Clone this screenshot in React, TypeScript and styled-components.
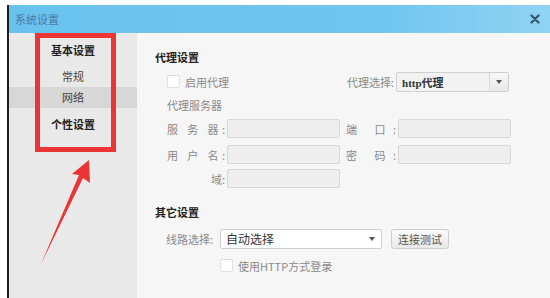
import styled, { createGlobalStyle } from "styled-components";

const Global = createGlobalStyle`
  html, body { margin: 0; padding: 0; background: #fff; }
  body { font-family: "Noto Sans CJK SC", "Noto Sans", sans-serif; }
`;

const FONT = `"Noto Sans CJK SC", "Noto Sans", sans-serif`;

const Frame = styled.div`
  width: 550px;
  height: 298px;
  padding: 5px 0 0 7px;
  box-sizing: border-box;
  overflow: hidden;
  background: #fff;
`;

const Win = styled.div`
  position: relative;
  height: 100%;
  display: flex;
  flex-direction: column;
  border-left: 2px solid #1e1e1e;
`;

const TitleBar = styled.div`
  height: 28px;
  flex: none;
  display: flex;
  align-items: center;
  justify-content: space-between;
  padding: 0 10px 0 6px;
  background: linear-gradient(90deg, #69c2ee 0%, #71c6ef 70%, #8fd3f3 100%);
`;

const Title = styled.span`
  font-size: 11px;
  color: #4b7ba3;
  font-family: ${FONT};
`;

const Close = styled.svg`
  display: block;
`;

const Body = styled.div`
  flex: 1;
  display: flex;
`;

const Sidebar = styled.div`
  width: 128px;
  flex: none;
  background: #e9e9e9;
  display: flex;
  flex-direction: column;
  padding-top: 7px;
`;

const NavItem = styled.div<{ $head?: boolean; $active?: boolean; $gap?: number }>`
  height: 21px;
  line-height: 21px;
  margin-top: ${(p) => p.$gap ?? 0}px;
  text-align: center;
  font-size: 11px;
  font-weight: ${(p) => (p.$head ? 700 : 400)};
  color: ${(p) => (p.$head ? "#222" : "#444")};
  background: ${(p) => (p.$active ? "#d7d7d7" : "transparent")};
`;

const Main = styled.div`
  flex: 1;
  background: #f6f6f6;
  padding: 16px 0 0 18px;
  display: flex;
  flex-direction: column;
`;

const Heading = styled.div<{ $gap?: number }>`
  font-size: 11px;
  font-weight: 700;
  color: #222;
  line-height: 16px;
  margin-top: ${(p) => p.$gap ?? 0}px;
`;

const Row = styled.div<{ $gap?: number; $indent?: number }>`
  display: flex;
  align-items: center;
  height: 19px;
  margin-top: ${(p) => p.$gap ?? 0}px;
  padding-left: ${(p) => p.$indent ?? 12}px;
`;

const Label = styled.span<{ $w?: number; $justify?: boolean; $right?: boolean; $lead?: number }>`
  width: ${(p) => (p.$w ? `${p.$w}px` : "auto")};
  flex: none;
  font-size: 11px;
  color: #8a8a8a;
  white-space: nowrap;
  text-align: ${(p) => (p.$justify ? "justify" : p.$right ? "right" : "left")};
  text-align-last: ${(p) => (p.$justify ? "justify" : "auto")};
  box-sizing: border-box;
  padding-left: ${(p) => p.$lead ?? 0}px;
  padding-right: 2px;
`;

const SubLabel = styled.div<{ $gap?: number }>`
  font-size: 11px;
  color: #8a8a8a;
  line-height: 16px;
  margin-top: ${(p) => p.$gap ?? 0}px;
  padding-left: 12px;
`;

const Input = styled.div<{ $w: number }>`
  width: ${(p) => p.$w}px;
  height: 19px;
  box-sizing: border-box;
  flex: none;
  background: #eeeeee;
  border: 1px solid #d6d6d6;
  border-radius: 2px;
`;

const Check = styled.span`
  width: 13px;
  height: 13px;
  box-sizing: border-box;
  background: #fff;
  border: 1px solid #e0e0e0;
  border-radius: 2px;
  margin-right: 5px;
  flex: none;
`;

const CheckText = styled.span<{ $w?: number }>`
  width: ${(p) => (p.$w ? `${p.$w}px` : "auto")};
  font-size: 11px;
  color: #8a8a8a;
`;

const Select = styled.div<{ $w: number; $plain?: boolean }>`
  width: ${(p) => p.$w}px;
  height: 20px;
  box-sizing: border-box;
  display: flex;
  align-items: center;
  background: ${(p) => (p.$plain ? "#fff" : "#f2f2f2")};
  border: 1px solid #cfcfcf;
  border-radius: 2px;
  flex: none;
`;

const SelectText = styled.span<{ $mono?: boolean }>`
  flex: 1;
  padding-left: 5px;
  font-size: ${(p) => (p.$mono ? 11 : 12)}px;
  font-weight: ${(p) => (p.$mono ? 600 : 400)};
  font-family: ${(p) => (p.$mono ? `"Liberation Serif", "Noto Sans CJK SC", serif` : FONT)};
  color: #333;
`;

const Drop = styled.span<{ $boxed?: boolean }>`
  width: 18px;
  height: 100%;
  display: flex;
  align-items: center;
  justify-content: center;
  border-left: ${(p) => (p.$boxed ? "1px solid #dadada" : "none")};
  background: ${(p) => (p.$boxed ? "linear-gradient(#f8f8f8, #e6e6e6)" : "transparent")};
  &::after {
    content: "";
    border-left: 3.5px solid transparent;
    border-right: 3.5px solid transparent;
    border-top: 4px solid #555;
  }
`;

const Button = styled.span`
  margin-left: 9px;
  height: 20px;
  padding: 0 6px;
  box-sizing: border-box;
  display: flex;
  align-items: center;
  font-size: 11px;
  color: #555;
  background: linear-gradient(#fbfbfb, #e9e9e9);
  border: 1px solid #cdcdcd;
  border-radius: 3px;
`;

const Callout = styled.div`
  position: absolute;
  left: 26px;
  top: 28px;
  width: 81px;
  height: 119px;
  box-sizing: border-box;
  border: 5px solid #eb3434;
  pointer-events: none;
`;

const Arrow = styled.svg`
  position: absolute;
  left: -7px;
  top: -5px;
  pointer-events: none;
`;

export default function App() {
  return (
    <Frame>
      <Global />
      <Win>
        <TitleBar>
          <Title>系统设置</Title>
          <Close width="10" height="10" viewBox="0 0 10 10">
            <path d="M1.5 1.5 L8.5 8.5 M8.5 1.5 L1.5 8.5" stroke="#34536d" strokeWidth="2.2" strokeLinecap="round" />
          </Close>
        </TitleBar>
        <Body>
          <Sidebar>
            <NavItem $head>基本设置</NavItem>
            <NavItem $gap={5}>常规</NavItem>
            <NavItem $active>网络</NavItem>
            <NavItem $head $gap={6}>个性设置</NavItem>
          </Sidebar>
          <Main>
            <Heading>代理设置</Heading>
            <Row $gap={7}>
              <Check />
              <CheckText $w={162}>启用代理</CheckText>
              <Label>代理选择:</Label>
              <Select $w={113}>
                <SelectText $mono>http代理</SelectText>
                <Drop $boxed />
              </Select>
            </Row>
            <SubLabel $gap={6}>代理服务器</SubLabel>
            <Row $gap={6}>
              <Label $w={60} $justify>服 务 器:</Label>
              <Input $w={113} />
              <Label $w={58} $justify $lead={6}>端 口:</Label>
              <Input $w={113} />
            </Row>
            <Row $gap={7}>
              <Label $w={60} $justify>用 户 名:</Label>
              <Input $w={113} />
              <Label $w={58} $justify $lead={6}>密 码:</Label>
              <Input $w={113} />
            </Row>
            <Row $gap={5}>
              <Label $w={60} $right>域:</Label>
              <Input $w={113} />
            </Row>
            <Heading $gap={16}>其它设置</Heading>
            <Row $gap={9} $indent={11}>
              <Label $w={54}>线路选择:</Label>
              <Select $w={162} $plain>
                <SelectText>自动选择</SelectText>
                <Drop />
              </Select>
              <Button>连接测试</Button>
            </Row>
            <Row $gap={8} $indent={65}>
              <Check />
              <CheckText>使用HTTP方式登录</CheckText>
            </Row>
          </Main>
        </Body>
        <Callout />
        <Arrow width="550" height="298" viewBox="0 0 550 298">
          <polygon
            points="87,160 88,183 81,178 39,264 77,175 70,174"
            fill="#eb3434"
          />
        </Arrow>
      </Win>
    </Frame>
  );
}
